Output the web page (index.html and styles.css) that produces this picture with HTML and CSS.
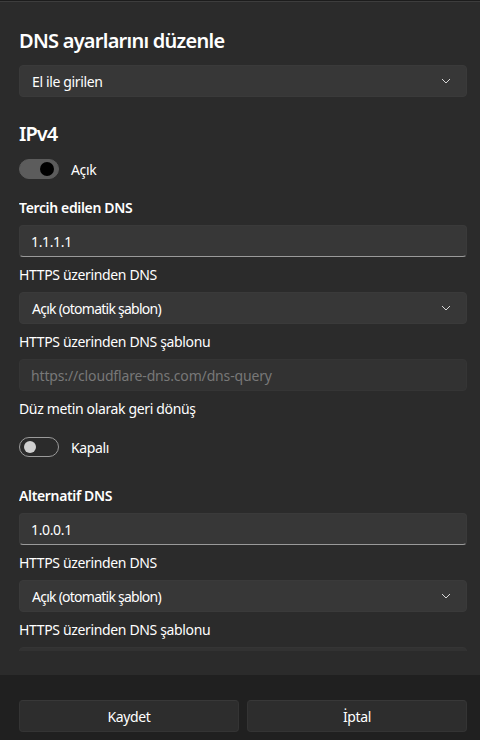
FILE: index.html
```html
<!DOCTYPE html>
<html lang="tr">

<head>
    <meta charset="utf-8">
    <title>DNS ayarlarını düzenle</title>
    <meta name="viewport" content="width=device-width, initial-scale=1.0">
    <link rel="stylesheet" href="styles.css">
</head>

<body>
    <div class="dialog">
        <div class="content">
            <div class="scroll">
                <h1 class="title">DNS ayarlarını düzenle</h1>

                <div class="select">
                    <span>El ile girilen</span>
                    <svg class="chevron" width="10" height="10" viewBox="0 0 10 10"><polyline points="1,3 5,7 9,3" /></svg>
                </div>

                <h2 class="section">IPv4</h2>
                <div class="toggle-row">
                    <span class="toggle on"><span class="knob"></span></span>
                    <span>Açık</span>
                </div>

                <div class="label strong">Tercih edilen DNS</div>
                <div class="input"><span>1.1.1.1</span></div>

                <div class="label">HTTPS üzerinden DNS</div>
                <div class="select">
                    <span class="tight">Açık (otomatik şablon)</span>
                    <svg class="chevron" width="10" height="10" viewBox="0 0 10 10"><polyline points="1,3 5,7 9,3" /></svg>
                </div>

                <div class="label">HTTPS üzerinden DNS şablonu</div>
                <div class="input disabled"><span>https://cloudflare-dns.com/dns-query</span></div>

                <div class="label">Düz metin olarak geri dönüş</div>
                <div class="toggle-row spaced">
                    <span class="toggle"><span class="knob"></span></span>
                    <span>Kapalı</span>
                </div>

                <div class="label strong alt">Alternatif DNS</div>
                <div class="input"><span>1.0.0.1</span></div>

                <div class="label">HTTPS üzerinden DNS</div>
                <div class="select">
                    <span class="tight">Açık (otomatik şablon)</span>
                    <svg class="chevron" width="10" height="10" viewBox="0 0 10 10"><polyline points="1,3 5,7 9,3" /></svg>
                </div>

                <div class="label">HTTPS üzerinden DNS şablonu</div>
                <div class="input disabled"><span>https://cloudflare-dns.com/dns-query</span></div>
            </div>
        </div>

        <div class="footer">
            <button class="btn">Kaydet</button>
            <button class="btn">İptal</button>
        </div>
    </div>
</body>

</html>
```

FILE: styles.css
```css
body {
    margin: 0;
    padding: 0;
    background-color: #1c1c1c;
    font-family: "Noto Sans", "Open Sans", sans-serif;
    font-size: 14px;
    letter-spacing: -0.35px;
    color: #ffffff;
}

.dialog {
    margin-top: 1px;
    height: 739px;
    display: flex;
    flex-direction: column;
    background-color: #2b2b2b;
    border-top: 1px solid #3d3d3d;
    box-sizing: border-box;
}

.content {
    flex: 1;
    min-height: 0;
    display: flex;
    flex-direction: column;
    padding: 0 13px 24px 19px;
}

.scroll {
    flex: 1;
    min-height: 0;
    overflow: hidden;
    padding-top: 25px;
}

.title {
    margin: 0 0 10px;
    font-size: 20px;
    line-height: 28px;
    font-weight: 600;
    letter-spacing: -0.75px;
}

.section {
    margin: 23px 0 0;
    font-size: 20px;
    line-height: 28px;
    font-weight: 600;
    letter-spacing: -1px;
}

.label {
    margin-top: 8px;
    line-height: 20px;
}

.label.strong {
    font-weight: 600;
    margin-top: 19px;
}

.label.alt {
    margin-top: 29px;
}

.select,
.input {
    margin-top: 7px;
    height: 32px;
    box-sizing: border-box;
    border-radius: 4px;
    background-color: #373737;
    display: flex;
    align-items: center;
}

.select {
    justify-content: space-between;
    padding: 0 15px 0 12px;
    border: 1px solid #3a3a3a;
}

.tight {
    letter-spacing: -0.75px;
}

.chevron {
    fill: none;
    stroke: #d6d6d6;
    stroke-width: 1;
}

.input {
    padding: 0 11px;
    border: 1px solid #3a3a3a;
    border-bottom: 1px solid #9a9a9a;
}

.input.disabled {
    background-color: #323232;
    border-color: #353535;
    color: #787878;
    letter-spacing: -0.15px;
}

.toggle-row {
    margin-top: 11px;
    height: 20px;
    display: flex;
    align-items: center;
    gap: 12px;
}

.toggle-row.spaced {
    margin-top: 18px;
}

.toggle {
    width: 40px;
    height: 20px;
    box-sizing: border-box;
    border-radius: 10px;
    border: 1px solid #9b9b9b;
    display: flex;
    align-items: center;
    padding: 0 4px;
}

.toggle .knob {
    width: 12px;
    height: 12px;
    border-radius: 50%;
    background-color: #d0d0d0;
}

.toggle.on {
    background-color: #5c5c5c;
    border-color: #5c5c5c;
    justify-content: flex-end;
}

.toggle.on .knob {
    width: 14px;
    height: 14px;
    background-color: #000000;
}

.footer {
    flex: none;
    height: 65px;
    box-sizing: border-box;
    background-color: #202020;
    padding: 25px 13px 0 19px;
    display: flex;
    gap: 8px;
    align-items: flex-start;
}

.btn {
    flex: 1;
    height: 32px;
    border-radius: 4px;
    border: 1px solid #343434;
    border-top-color: #383838;
    background-color: #2d2d2d;
    color: #ffffff;
    font-family: inherit;
    font-size: 14px;
    letter-spacing: inherit;
}
```
